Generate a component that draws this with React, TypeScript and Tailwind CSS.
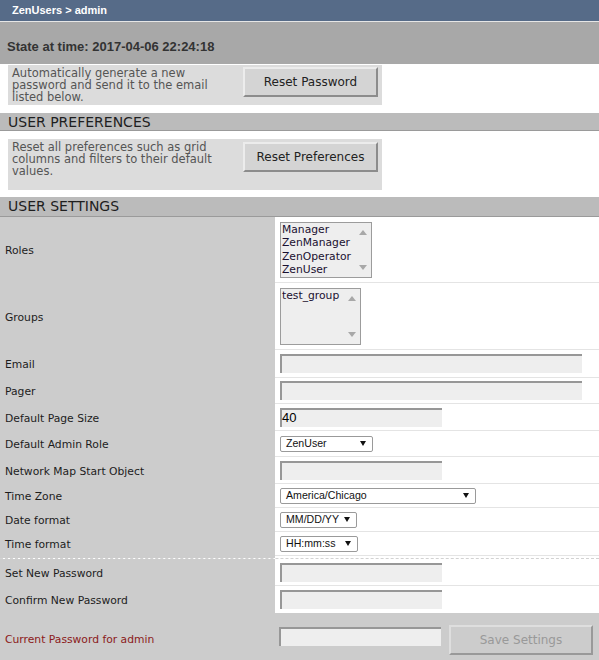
import React from 'react';

const dv = "font-['DejaVu_Sans',Verdana,sans-serif]";
const lib = "font-['Liberation_Sans',Arial,sans-serif]";

function Tri({ up, className, w = 8 }: { up?: boolean; className: string; w?: number }) {
  return (
    <svg width={w} height="5" viewBox={`0 0 ${w} 5`} className={className}>
      {up ? (
        <polygon points={`0,5 ${w},5 ${w / 2},0`} fill="currentColor" />
      ) : (
        <polygon points={`0,0 ${w},0 ${w / 2},5`} fill="currentColor" />
      )}
    </svg>
  );
}

function ListBox({ items, width, height }: { items: string[]; width: string; height: string }) {
  return (
    <div className={`flex border border-[#9c9c9c] bg-[#eeeeee] ${width} ${height}`}>
      <div className={`flex-1 pl-[1px] text-[10.75px] leading-[13.6px] text-[#1a1030] ${dv}`}>
        {items.map((it) => (
          <div key={it}>{it}</div>
        ))}
      </div>
      <div className="flex w-[17px] flex-col items-center justify-between py-[7px] text-[#a8a8a8]">
        <Tri up className="" />
        <Tri className="" />
      </div>
    </div>
  );
}

function TextInput({ width, value }: { width: string; value?: string }) {
  return (
    <div className={`h-[19px] border-l-2 border-t-2 border-[#979797] bg-[#eeeeee] text-[13px] leading-[16px] text-black ${lib} ${width}`}>
      {value}
    </div>
  );
}

function Select({ width, value }: { width: string; value: string }) {
  return (
    <div
      className={`flex h-[16px] items-center justify-between rounded-[2px] border border-[#9a9a9a] bg-white pl-[5px] pr-[6px] text-[10.6px] text-[#111] ${lib} ${width}`}
    >
      <span>{value}</span>
      <Tri className="text-[#111]" w={6} />
    </div>
  );
}

function Row({ label, h, children, last }: { label: string; h: string; children: React.ReactNode; last?: boolean }) {
  return (
    <div className={`grid grid-cols-[275px_1fr] ${h}`}>
      <div className={`flex items-center bg-[#cccccc] pl-[5px] pt-[3px] text-[10.75px] text-[#1c1c1c] ${dv}`}>{label}</div>
      <div className={`flex items-center bg-white pl-[5px] ${last ? '' : 'border-b border-[#e4e4e4]'}`}>{children}</div>
    </div>
  );
}

function Section({ title, h }: { title: string; h: string }) {
  return (
    <div className={`border-b border-[#9a9a9a] bg-[#bbbbbb] pl-[8px] pt-[1px] text-[14px] leading-[16px] text-[#1e1e1e] ${dv} ${h}`}>
      {title}
    </div>
  );
}

function ActionBox({ text, button, pb, mt }: { text: string; button: string; pb: string; mt: string }) {
  return (
    <div className={`ml-[8px] flex w-[374px] items-start justify-between bg-[#dcdcdc] pl-[4px] pr-[4px] pt-[1px] ${pb}`}>
      <p className={`mt-[1px] w-[215px] text-[11.5px] leading-[12px] text-[#555] ${dv}`}>{text}</p>
      <button
        className={`h-[30px] w-[135px] border-2 border-b-[#8c8c8c] border-l-[#ececec] border-r-[#8c8c8c] border-t-[#ececec] bg-[#d4d4d4] text-[12px] text-[#222] ${dv} ${mt}`}
      >
        {button}
      </button>
    </div>
  );
}

export default function App() {
  return (
    <div className="w-full bg-white">
      <div className={`h-[21px] bg-[#566b88] pl-[12px] text-[11px] font-bold leading-[21px] text-white ${lib}`}>
        ZenUsers &gt; admin
      </div>
      <div className="h-[1px] bg-[#e6e6e6]" />
      <div className={`h-[42px] bg-[#a8a8a8] pl-[7px] pt-[17px] text-[13px] font-bold leading-[16px] text-[#333] ${lib}`}>
        State at time: 2017-04-06 22:24:18
      </div>
      <div className="h-[1px]" />
      <ActionBox
        text="Automatically generate a new password and send it to the email listed below."
        button="Reset Password"
        pb="pb-[2px]"
        mt="mt-[1px]"
      />
      <div className="h-[8px]" />
      <Section title="USER PREFERENCES" h="h-[18px]" />
      <div className="h-[8px]" />
      <ActionBox
        text="Reset all preferences such as grid columns and filters to their default values."
        button="Reset Preferences"
        pb="pb-[13px]"
        mt="mt-[2px]"
      />
      <div className="h-[7px]" />
      <Section title="USER SETTINGS" h="h-[20px]" />

      <Row label="Roles" h="h-[66px]">
        <ListBox items={['Manager', 'ZenManager', 'ZenOperator', 'ZenUser']} width="w-[92px]" height="h-[56px]" />
      </Row>
      <Row label="Groups" h="h-[67px]">
        <ListBox items={['test_group']} width="w-[81px]" height="h-[57px]" />
      </Row>
      <Row label="Email" h="h-[28px]">
        <TextInput width="w-[302px]" />
      </Row>
      <Row label="Pager" h="h-[26px]">
        <TextInput width="w-[302px]" />
      </Row>
      <Row label="Default Page Size" h="h-[27px]">
        <TextInput width="w-[162px]" value="40" />
      </Row>
      <Row label="Default Admin Role" h="h-[26px]">
        <Select width="w-[93px]" value="ZenUser" />
      </Row>
      <Row label="Network Map Start Object" h="h-[27px]">
        <TextInput width="w-[162px]" />
      </Row>
      <Row label="Time Zone" h="h-[24px]">
        <Select width="w-[196px]" value="America/Chicago" />
      </Row>
      <Row label="Date format" h="h-[24px]">
        <Select width="w-[77px]" value="MM/DD/YY" />
      </Row>
      <Row label="Time format" h="h-[24px]">
        <Select width="w-[78px]" value="HH:mm:ss" />
      </Row>
      <div className="grid h-[3px] grid-cols-[275px_1fr] border-b border-dashed border-[#d2d2d2]">
        <div className="bg-[#cccccc]" />
        <div className="bg-white" />
      </div>
      <Row label="Set New Password" h="h-[27px]">
        <TextInput width="w-[162px]" />
      </Row>
      <Row label="Confirm New Password" h="h-[27px]" last>
        <TextInput width="w-[162px]" />
      </Row>

      <div className="grid h-[47px] grid-cols-[275px_1fr] bg-[#cccccc]">
        <div className={`pl-[5px] pt-[20px] text-[10.75px] leading-[13px] text-[#8b1a1a] ${dv}`}>Current Password for admin</div>
        <div className="flex items-start pl-[4px]">
          <div className="mt-[14px]">
            <TextInput width="w-[162px]" />
          </div>
          <button
            className={`ml-[8px] mt-[12px] h-[30px] w-[144px] border-2 border-b-[#999] border-l-[#dedede] border-r-[#999] border-t-[#dedede] bg-[#cccccc] text-[12px] text-[#999] ${dv}`}
          >
            Save Settings
          </button>
        </div>
      </div>
    </div>
  );
}
